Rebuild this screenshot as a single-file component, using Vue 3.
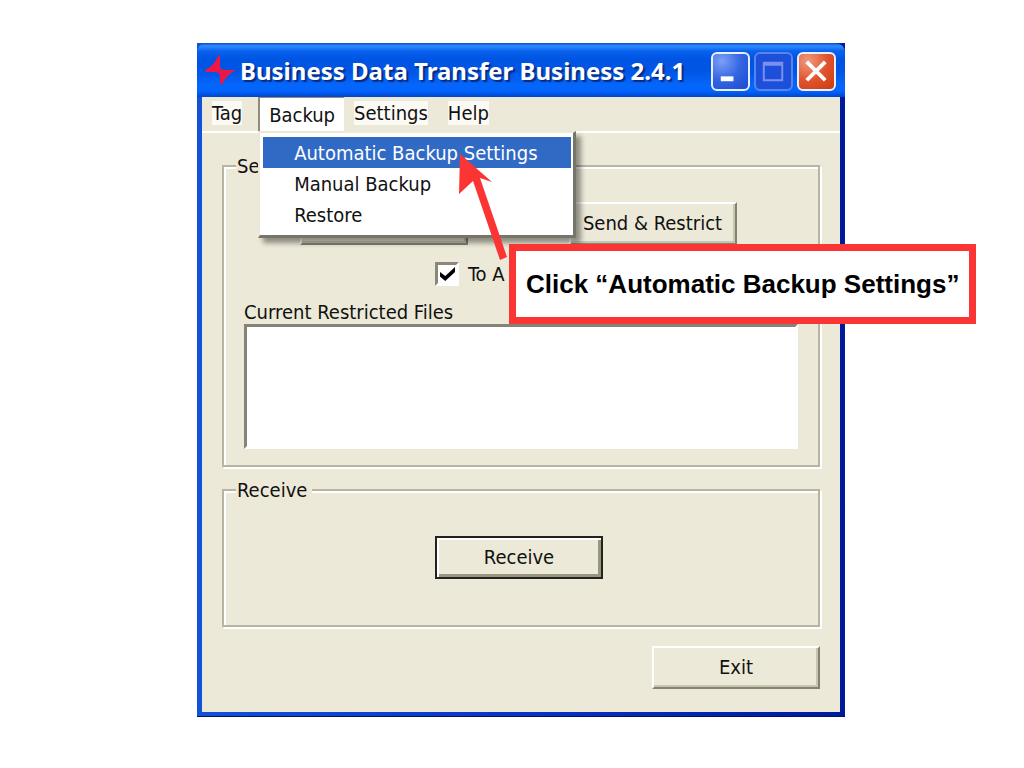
<script setup>
import { ref } from 'vue'

const toA = ref(true)
const menus = ['Tag', 'Backup', 'Settings', 'Help']
const openMenu = ref('Backup')
const entries = ['Automatic Backup Settings', 'Manual Backup', 'Restore']
</script>

<template>
  <main class="page">
    <section class="window">
      <header class="titlebar">
        <svg class="logo" viewBox="0 0 32 32" aria-hidden="true">
          <path d="M0 15Q9 11 13 1Q15 -1 15 3V12Q16 15 19 15H31Q22 19 18 28Q15 31 15 27V20Q14 17 10 17H1Z" fill="#ee1645" />
        </svg>
        <h1>Business Data Transfer Business 2.4.1</h1>
        <div class="controls">
          <button class="ctl" type="button" aria-label="Minimize">
            <svg viewBox="0 0 36 36"><path d="M8 23h13v5H8z" fill="#fff" /></svg>
          </button>
          <button class="ctl dim" type="button" aria-label="Maximize" disabled>
            <svg viewBox="0 0 36 36"><path d="M8 9h19v18H8zM8 11h19" fill="none" stroke="#7c8ef0" stroke-width="2" /></svg>
          </button>
          <button class="ctl close" type="button" aria-label="Close">
            <svg viewBox="0 0 36 36"><path d="M8 8l19 19M27 8L8 27" stroke="#fff" stroke-width="4" /></svg>
          </button>
        </div>
      </header>

      <nav class="menubar">
        <div v-for="m in menus" :key="m" class="slot">
          <button class="menu" :class="{ open: m === openMenu }" type="button" @click="openMenu = m">
            <span>{{ m }}</span>
          </button>
          <div v-if="m === 'Backup'" class="dropdown" role="menu">
            <button v-for="(e, i) in entries" :key="e" class="entry" :class="{ active: i === 0 }" type="button" role="menuitem">{{ e }}</button>
          </div>
        </div>
      </nav>

      <div class="body">
        <fieldset class="group send">
          <legend>Send</legend>
          <div class="pair">
            <button class="btn" type="button" aria-label="Send"></button>
            <button class="btn" type="button">Send &amp; Restrict</button>
          </div>
          <div class="option">
            <input id="to-a" v-model="toA" type="checkbox" />
            <label for="to-a">To A</label>
          </div>
          <label class="caption" for="files">Current Restricted Files</label>
          <select id="files" class="files" size="5"></select>
        </fieldset>

        <fieldset class="group receive">
          <legend>Receive</legend>
          <button class="btn default" type="button">Receive</button>
        </fieldset>

        <footer class="actions">
          <button class="btn" type="button">Exit</button>
        </footer>
      </div>

      <aside class="callout">
        <svg class="arrow" viewBox="0 0 60 110" aria-hidden="true">
          <path d="M11 1L43 29L31 25L58 104L51 107L24 28L10 41Z" fill="#fb3434" />
        </svg>
        <p>Click “Automatic Backup Settings”</p>
      </aside>
    </section>
  </main>
</template>

<style>
body {
  margin: 0;
  background: #fff;
}
</style>

<style scoped>
* {
  box-sizing: border-box;
}

.page {
  padding: 43px 179px 0 197px;
  font-family: "DejaVu Sans Condensed", "DejaVu Sans", sans-serif;
  font-size: 20px;
  line-height: 24px;
  color: #111;
}

button {
  font: inherit;
  color: inherit;
  margin: 0;
  padding: 0;
}

.window {
  position: relative;
  background: linear-gradient(90deg, #1252d8, #0a35c0 50%, #001a9c);
  padding: 0 5px 4px;
  border-bottom: 1px solid #001070;
}

.titlebar {
  display: flex;
  align-items: center;
  height: 54px;
  margin: 0 -5px;
  padding: 2px 9px 0 8px;
  border-radius: 9px 9px 0 0;
  background: linear-gradient(#0a4fc8 0, #2f8cff 3px, #0a62ef 8px, #0054e3 16px, #0055e5 28px, #0566fa 42px, #0264ff 48px, #0046c8 54px);
}

.logo {
  width: 32px;
  height: 32px;
  flex: none;
}

h1 {
  flex: 1;
  margin: 0 0 0 3px;
  font: bold 24px/30px "Noto Sans", sans-serif;
  color: #fff;
  text-shadow: 2px 2px 1px #0a2a80;
  white-space: nowrap;
}

.controls {
  display: flex;
  gap: 4px;
}

.ctl {
  width: 39px;
  height: 39px;
  border: 2px solid #e8efff;
  border-radius: 6px;
  background: radial-gradient(circle at 25% 20%, #7d9ff5, #3465e2 50%, #1c4bd0);
}

.ctl svg {
  display: block;
  width: 100%;
}

.ctl.dim {
  border-color: #5884ee;
  background: #1d50da;
}

.ctl.close {
  background: radial-gradient(circle at 25% 20%, #f09a80, #e2542f 50%, #c93a0c);
}

.menubar {
  display: flex;
  height: 36px;
  background: #ece9d8;
  border-bottom: 2px solid #fff;
}

.slot {
  position: relative;
}

.slot:first-child {
  margin-right: 6px;
}

.menu {
  display: block;
  height: 34px;
  padding: 0 10px 2px;
  border: 0;
  background: none;
}

.menu span {
  display: block;
  background: #fbfaf5;
}

.menu.open {
  padding: 0 9px;
  border-left: 2px solid #8f8c7c;
  border-top: 1px solid #8f8c7c;
  background: #fff;
}

.menu.open span {
  background: none;
}

.dropdown {
  position: absolute;
  z-index: 2;
  left: 0;
  top: 34px;
  width: 318px;
  padding: 4px 2px 5px 3px;
  background: #fff;
  border: 2px solid #ece9d8;
  border-right: 3px solid #77746a;
  border-bottom: 3px solid #77746a;
  box-shadow: 5px 5px 5px rgba(0, 0, 0, 0.4);
}

.entry {
  display: block;
  width: 100%;
  height: 31px;
  padding-left: 31px;
  border: 0;
  background: none;
  text-align: left;
  white-space: nowrap;
}

.entry.active {
  background: #316ac5;
  color: #fff;
}

.body {
  padding: 21px 20px 23px;
  background: #ece9d8;
}

.group {
  display: flex;
  flex-direction: column;
  min-width: 0;
  margin: 0;
  padding: 0 20px;
  border: 2px solid #b7b4a4;
  box-shadow: 2px 2px 0 #fff, inset 2px 2px 0 #fff;
}

legend {
  margin-left: -8px;
  padding: 0 5px 0 1px;
  background: #ece9d8;
}

.send {
  height: 313px;
  padding-top: 24px;
}

.pair {
  display: flex;
  justify-content: center;
  gap: 101px;
  padding-right: 6px;
}

.btn {
  width: 168px;
  height: 43px;
  padding-bottom: 2px;
  border: 2px solid;
  border-color: #fff #85826f #85826f #fff;
  background: #ece9d8;
  box-shadow: inset -2px -2px 0 #c8c5b3;
}

.option {
  display: flex;
  align-items: center;
  gap: 9px;
  margin: 17px 0 0 191px;
}

input {
  appearance: none;
  width: 24px;
  height: 24px;
  margin: 0;
  border: 3px solid;
  border-color: #8b887a #fff #fff #8b887a;
  background: #fff;
}

input:checked::before {
  content: "";
  display: block;
  width: 15px;
  height: 14px;
  margin: 2px;
  background: #000;
  clip-path: polygon(0 35%, 35% 65%, 100% 0, 100% 35%, 35% 100%, 0 68%);
}

.caption {
  margin-top: 14px;
}

.files {
  width: 100%;
  height: 125px;
  border: 3px solid;
  border-color: #858276 #fff #fff #858276;
  border-radius: 0;
  background: #fff;
}

.receive {
  align-items: center;
  height: 149px;
  margin-top: 11px;
  padding-top: 34px;
  padding-right: 24px;
}

.btn.default {
  border-color: #24221c;
  box-shadow: inset 2px 2px 0 #fff, inset -3px -3px 0 #97947f;
}

.actions {
  display: flex;
  justify-content: flex-end;
  margin: 19px 0 0;
}

.callout {
  position: absolute;
  z-index: 3;
  left: 312px;
  top: 201px;
  padding: 20px 10px;
  border: 7px solid #fb3434;
  background: #fff;
  color: #000;
}

.callout p {
  margin: 0;
  font: bold 26px/26px "Liberation Sans", Arial, sans-serif;
  white-space: nowrap;
}

.arrow {
  position: absolute;
  left: -67px;
  top: -98px;
  width: 60px;
  height: 110px;
}
</style>
